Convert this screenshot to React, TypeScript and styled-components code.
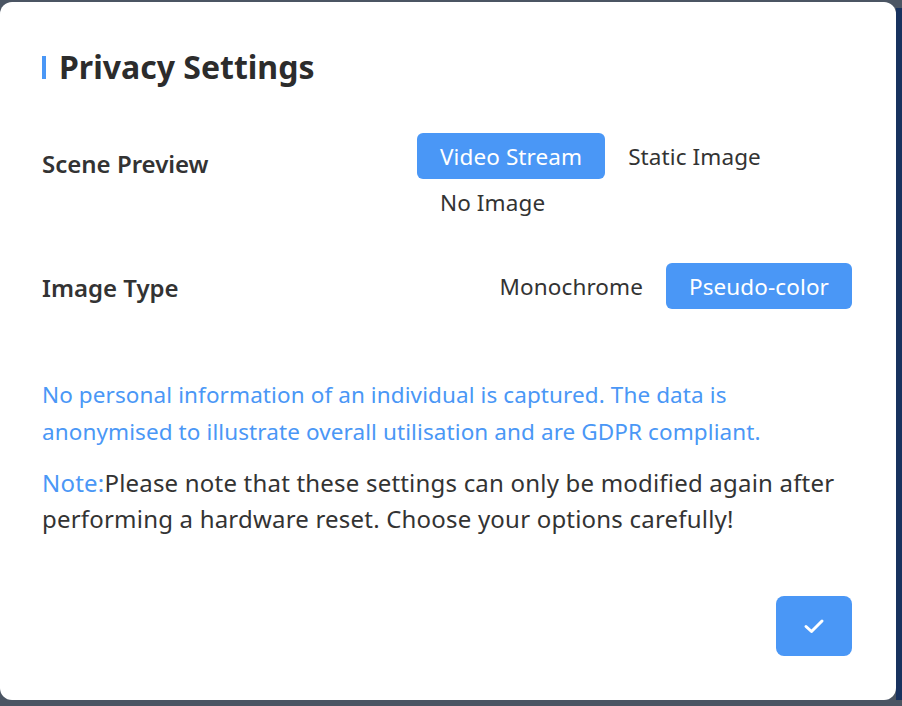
import { useState } from "react";
import styled, { createGlobalStyle } from "styled-components";

const GlobalStyle = createGlobalStyle`
  html, body {
    margin: 0;
    padding: 0;
    background: #4b5563;
    font-family: "Noto Sans", "Open Sans", sans-serif;
    overflow: hidden;
  }
`;

const Page = styled.div`
  display: grid;
  grid-template-columns: 896px 1fr;
  padding-top: 2px;
  height: 704px;
  box-sizing: border-box;
`;

const SideStrip = styled.div`
  background: #18325f;
  margin-top: 6px;
  height: 692px;
`;

const Modal = styled.div`
  background: #fff;
  border-radius: 12px;
  height: 698px;
  box-sizing: border-box;
  padding: 47px 44px 44px 42px;
  display: flex;
  flex-direction: column;
  color: #333;
`;

const Title = styled.h2`
  margin: 0;
  display: flex;
  align-items: center;
  gap: 13px;
  font-size: 32px;
  line-height: 36px;
  font-weight: 700;
  color: #2c2c2c;

  &::before {
    content: "";
    width: 4px;
    height: 23px;
    background: #4a97f6;
  }
`;

const Row = styled.div<{ $top: number }>`
  display: flex;
  justify-content: space-between;
  align-items: flex-start;
  margin-top: ${({ $top }) => $top}px;
`;

const Label = styled.div<{ $offset: number }>`
  font-size: 24px;
  font-weight: 600;
  line-height: 28px;
  color: #333;
  padding-top: ${({ $offset }) => $offset}px;
`;

const Options = styled.div`
  display: flex;
  flex-wrap: wrap;
  max-width: 435px;
`;

const Option = styled.button<{ $active: boolean }>`
  border: none;
  border-radius: 6px;
  height: 46px;
  padding: 0 23px;
  font-family: inherit;
  font-size: 22.5px;
  letter-spacing: 0.1px;
  cursor: pointer;
  background: ${({ $active }) => ($active ? "#4a97f6" : "transparent")};
  color: ${({ $active }) => ($active ? "#fff" : "#333")};
`;

const Info = styled.p`
  margin: 67px 0 0;
  font-size: 22.5px;
  letter-spacing: 0.1px;
  line-height: 37px;
  color: #4a97f6;
`;

const Note = styled.p`
  margin: 15px 0 0;
  font-size: 24px;
  letter-spacing: 0.2px;
  line-height: 36px;
  color: #333;
`;

const NoteTag = styled.span`
  color: #4a97f6;
`;

const Footer = styled.div`
  margin-top: auto;
  display: flex;
  justify-content: flex-end;
`;

const ConfirmButton = styled.button`
  width: 76px;
  height: 60px;
  border: none;
  border-radius: 8px;
  background: #4a97f6;
  display: flex;
  align-items: center;
  justify-content: center;
  cursor: pointer;
`;

const previewOptions = ["Video Stream", "Static Image", "No Image"];
const imageOptions = ["Monochrome", "Pseudo-color"];

export default function App() {
  const [preview, setPreview] = useState("Video Stream");
  const [imageType, setImageType] = useState("Pseudo-color");

  return (
    <>
      <GlobalStyle />
      <Page>
        <Modal>
          <Title>Privacy Settings</Title>

          <Row $top={48}>
            <Label $offset={17}>Scene Preview</Label>
            <Options>
              {previewOptions.map((o) => (
                <Option key={o} $active={preview === o} onClick={() => setPreview(o)}>
                  {o}
                </Option>
              ))}
            </Options>
          </Row>

          <Row $top={38}>
            <Label $offset={11}>Image Type</Label>
            <Options>
              {imageOptions.map((o) => (
                <Option key={o} $active={imageType === o} onClick={() => setImageType(o)}>
                  {o}
                </Option>
              ))}
            </Options>
          </Row>

          <Info>
            No personal information of an individual is captured. The data is anonymised to
            illustrate overall utilisation and are GDPR compliant.
          </Info>
          <Note>
            <NoteTag>Note:</NoteTag>Please note that these settings can only be modified again
            after performing a hardware reset. Choose your options carefully!
          </Note>

          <Footer>
            <ConfirmButton aria-label="Confirm">
              <svg width="22" height="16" viewBox="0 0 22 16" fill="none">
                <path
                  d="M3 8.5 L8.5 13.5 L19 3"
                  stroke="#fff"
                  strokeWidth="3"
                  strokeLinecap="round"
                  strokeLinejoin="round"
                />
              </svg>
            </ConfirmButton>
          </Footer>
        </Modal>
        <SideStrip />
      </Page>
    </>
  );
}
